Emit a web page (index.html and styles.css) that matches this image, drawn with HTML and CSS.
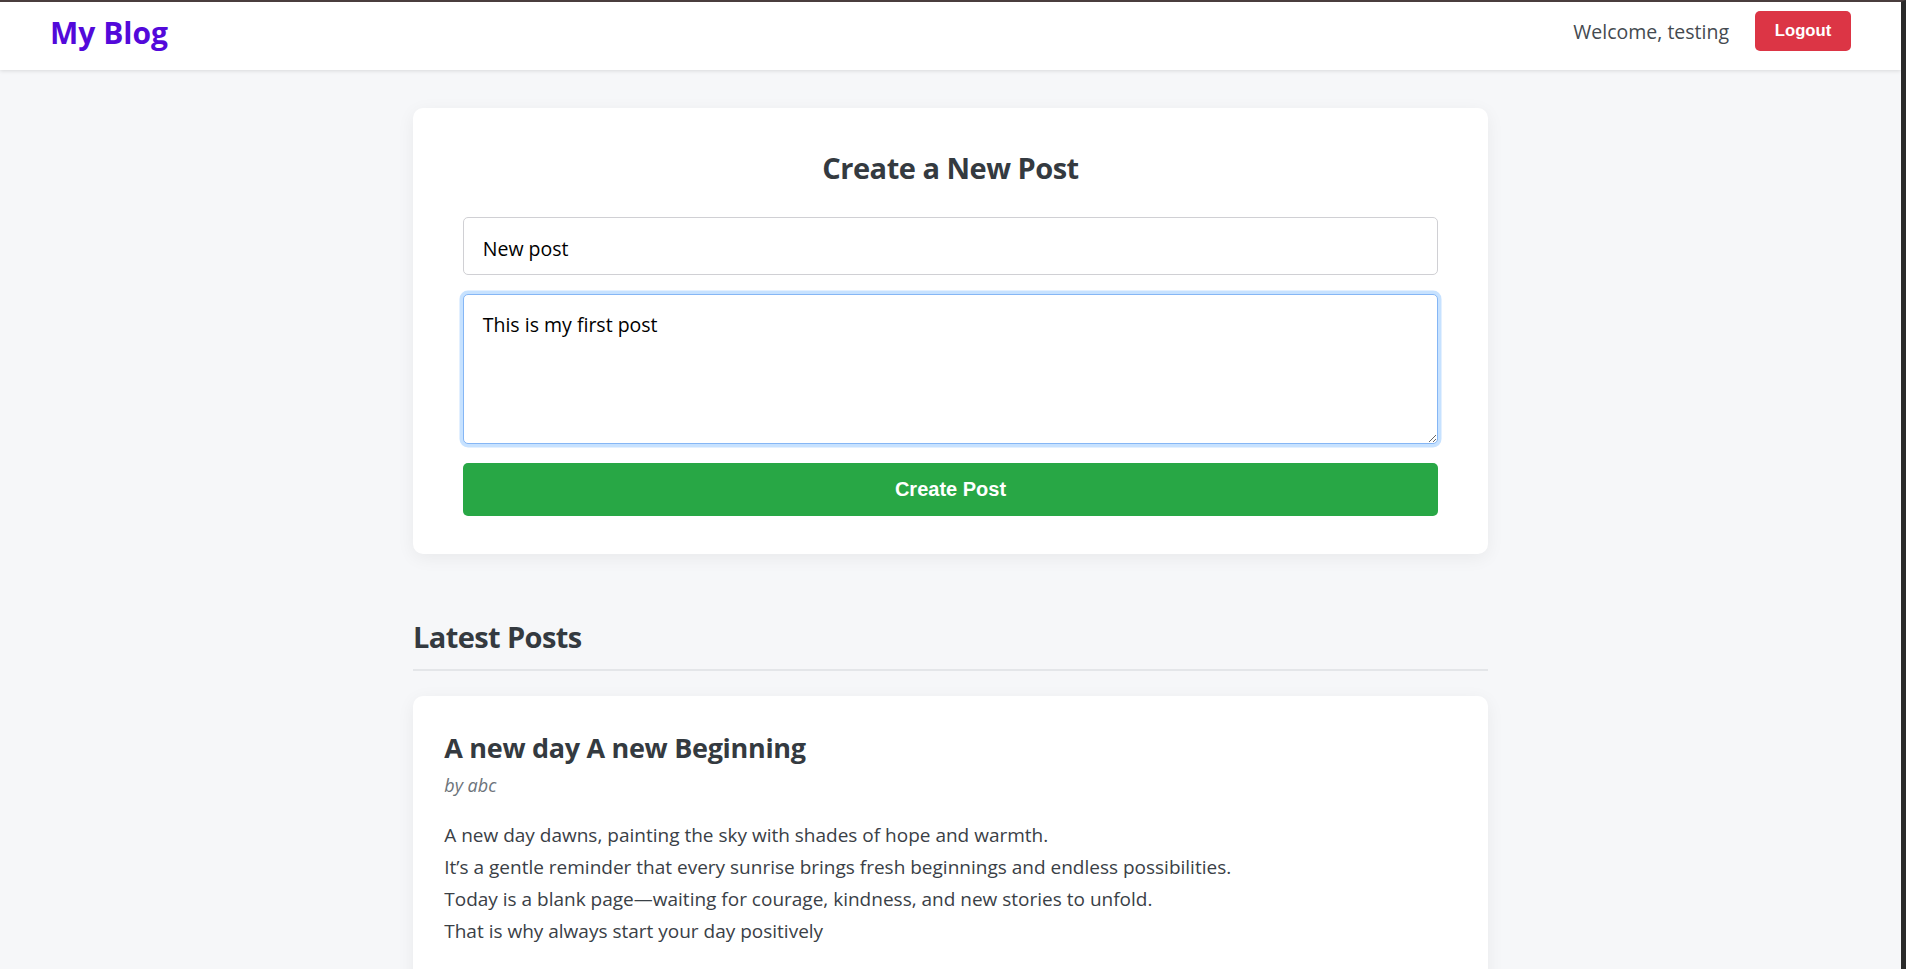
FILE: index.html
```html
<!DOCTYPE html>
<html lang="en">
<head>
<meta charset="utf-8">
<title>My Blog</title>
<link rel="stylesheet" href="styles.css">
</head>
<body>
<header class="topbar">
  <div class="logo">My Blog</div>
  <div class="user-nav">
    <span class="welcome">Welcome, testing</span>
    <button class="btn-logout">Logout</button>
  </div>
</header>
<main class="container">
  <section class="card form-card">
    <h2 class="form-title">Create a New Post</h2>
    <input class="field" type="text" value="New post">
    <textarea class="field field-area">This is my first post</textarea>
    <button class="btn-create">Create Post</button>
  </section>
  <section class="posts">
    <h2 class="posts-title">Latest Posts</h2>
    <article class="card post-card">
      <h3 class="post-title">A new day A new Beginning</h3>
      <div class="post-author">by abc</div>
      <p class="post-body">A new day dawns, painting the sky with shades of hope and warmth.<br>It’s a gentle reminder that every sunrise brings fresh beginnings and endless possibilities.<br>Today is a blank page—waiting for courage, kindness, and new stories to unfold.<br>That is why always start your day positively</p>
    </article>
  </section>
</main>
</body>
</html>
```

FILE: styles.css
```css
* { box-sizing: border-box; }

html {
  margin: 0;
  height: 100vh;
  overflow: hidden;
  border-top: 2px solid #4a3e3e;
  border-right: 5px solid #2a2a2a;
  background: #f6f7f9;
}

body {
  margin: 0;
  font-family: "Open Sans", "Noto Sans", sans-serif;
  color: #343a40;
}

.topbar {
  display: flex;
  align-items: center;
  justify-content: space-between;
  padding: 9px 50px 19px 50px;
  background: #ffffff;
  box-shadow: 0 1px 4px rgba(0, 0, 0, 0.12);
  position: relative;
  z-index: 1;
}

.logo {
  font-size: 30px;
  padding-top: 3px;
  line-height: 37px;
  font-weight: 700;
  color: #5309da;
}

.user-nav {
  display: flex;
  align-items: center;
  gap: 26px;
}

.welcome {
  font-size: 19.5px;
  color: #444a50;
}

.btn-logout {
  height: 40px;
  width: 96px;
  padding: 0;
  border: none;
  border-radius: 5px;
  background: #dc3545;
  color: #ffffff;
  font-family: "Liberation Sans", Arial, sans-serif;
  font-weight: 700;
  font-size: 16.67px;
}

.container {
  width: 1075px;
  margin: 38px auto 0 auto;
}

.card {
  background: #ffffff;
  border-radius: 10px;
  box-shadow: 0 4px 18px rgba(0, 0, 0, 0.06);
}

.form-card {
  padding: 37.5px 50px 38.5px 50px;
}

.form-title {
  margin: 0 0 31.5px 0;
  padding-top: 4px;
  font-size: 29px;
  line-height: 36px;
  letter-spacing: -0.5px;
  font-weight: 700;
  text-align: center;
  color: #343a40;
}

.field {
  display: block;
  width: 100%;
  padding: 17.5px 18.75px 12.5px 18.75px;
  border: 1px solid #d0d0d4;
  border-radius: 5px;
  font-family: inherit;
  font-size: 19.5px;
  line-height: 26px;
  color: #000000;
  background: #ffffff;
  margin: 0 0 18.75px 0;
  outline: none;
}

.field-area {
  height: 150px;
  resize: vertical;
  border-color: #85b6f5;
  box-shadow: 0 0 0 3.5px rgba(0, 123, 255, 0.22);
}

.btn-create {
  display: block;
  width: 100%;
  padding: 15px;
  border: none;
  border-radius: 5px;
  background: #28a745;
  color: #ffffff;
  font-family: "Liberation Sans", Arial, sans-serif;
  font-weight: 700;
  font-size: 20px;
  line-height: 23px;
}

.posts {
  margin-top: 62px;
}

.posts-title {
  margin: 0 0 25px 0;
  padding: 2px 0 13px 0;
  border-bottom: 2px solid #e4e6e9;
  font-size: 29px;
  line-height: 38px;
  letter-spacing: -0.6px;
  font-weight: 700;
  color: #343a40;
}

.post-card {
  padding: 31.25px;
  min-height: 400px;
}

.post-title {
  margin: 0 0 7px 0;
  padding-top: 4px;
  font-size: 27px;
  line-height: 33px;
  letter-spacing: -0.3px;
  font-weight: 700;
  color: #343a40;
}

.post-author {
  padding-top: 4px;
  font-size: 18px;
  line-height: 20px;
  font-style: italic;
  color: #6c737a;
}

.post-body {
  margin: 23.5px 0 0 0;
  font-size: 19px;
  line-height: 32px;
  color: #3a4046;
}
```
